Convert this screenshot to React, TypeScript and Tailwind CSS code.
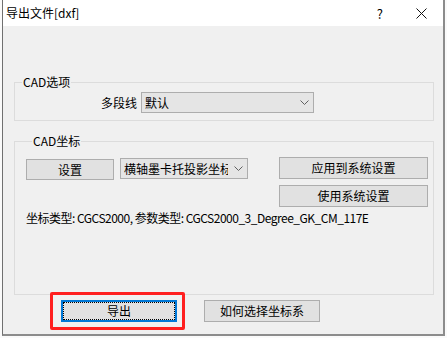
import React from 'react';

const FONT = { fontFamily: '"Noto Sans CJK SC", "Noto Sans", sans-serif' };

const Chevron = () => (
  <svg width="9" height="5" viewBox="0 0 9 5" className="shrink-0">
    <polyline points="0.5,0.5 4.5,4.5 8.5,0.5" fill="none" stroke="#606060" strokeWidth="1" />
  </svg>
);

const Combo = ({ text, className }: { text: string; className: string }) => (
  <div className={`flex items-center h-[21px] bg-[#e5e5e5] border border-[#adadad] pl-[3px] pr-[4px] ${className}`}>
    <span className="flex-1 mr-[6px] overflow-hidden whitespace-nowrap text-[12px] leading-[19px] text-black">{text}</span>
    <Chevron />
  </div>
);

const Btn = ({ label, className }: { label: string; className: string }) => (
  <button className={`flex items-center justify-center bg-[#e1e1e1] border border-[#adadad] text-[12px] leading-none text-black ${className}`}>
    {label}
  </button>
);

export default function App() {
  return (
    <div className="w-[447px] h-[338px] bg-[#fafafa] pl-[2px] overflow-hidden" style={FONT}>
      <div className="w-[443px] h-[336px] flex flex-col bg-[#f0f0f0] border-l border-l-[#707070] border-r-2 border-b-2 border-[#8c8c8c]">
        {/* title bar */}
        <div className="h-[26px] shrink-0 bg-white flex items-center pl-[3px] text-[12px] text-black">
          <span className="leading-none">导出文件[dxf]</span>
          <span className="ml-auto mr-[33px] text-[13px] leading-none">?</span>
          <svg width="11" height="11" viewBox="0 0 11 11" className="mr-[16px]">
            <path d="M0.5 0.5 L10.5 10.5 M10.5 0.5 L0.5 10.5" stroke="#111" strokeWidth="1" />
          </svg>
        </div>

        {/* body */}
        <div className="flex-1 flex flex-col pl-[11px] pr-[9px]">
          <fieldset className="mt-[49px] h-[46px] border border-[#dcdcdc] pl-px">
            <legend className="ml-[6px] px-[1px] text-[12px] leading-[14px] text-black">CAD选项</legend>
            <div className="flex items-start mt-[3px]">
              <span className="w-[125px] pr-[4px] text-right text-[12px] leading-[21px] text-black">多段线</span>
              <Combo text="默认" className="w-[173px]" />
            </div>
          </fieldset>

          <fieldset className="mt-[13px] h-[161px] border border-[#dcdcdc] pl-[11px]">
            <legend className="ml-[6px] px-[1px] text-[12px] leading-[14px] text-black">CAD坐标</legend>
            <div className="flex items-start mt-[9px]">
              <Btn label="设置" className="w-[88px] h-[21px] mt-[2px]" />
              <Combo text="横轴墨卡托投影坐标" className="w-[128px] ml-[6px] mt-[1px]" />
              <div className="flex flex-col gap-[6px] ml-[31px]">
                <Btn label="应用到系统设置" className="w-[149px] h-[22px]" />
                <Btn label="使用系统设置" className="w-[149px] h-[22px]" />
              </div>
            </div>
            <div className="mt-[3px] text-[12px] leading-[16px] tracking-[-0.5px] text-black whitespace-nowrap">
              坐标类型: CGCS2000, 参数类型: CGCS2000_3_Degree_GK_CM_117E
            </div>
          </fieldset>

          <div className="flex items-start mt-[5px] pl-[47px]">
            <div className="relative">
              <button className="relative w-[116px] h-[22px] bg-[#e1e1e1] border-2 border-[#0078d7] flex items-center justify-center text-[12px] leading-none text-black">
                <span className="absolute inset-0 border border-dotted border-black" />
                导出
              </button>
              <div className="absolute -left-[11px] -right-[8px] -top-[8px] -bottom-[8px] border-[3px] border-[#ff1f1f] rounded-[2px]" />
            </div>
            <Btn label="如何选择坐标系" className="w-[116px] h-[22px] ml-[27px]" />
          </div>
        </div>
      </div>
    </div>
  );
}
